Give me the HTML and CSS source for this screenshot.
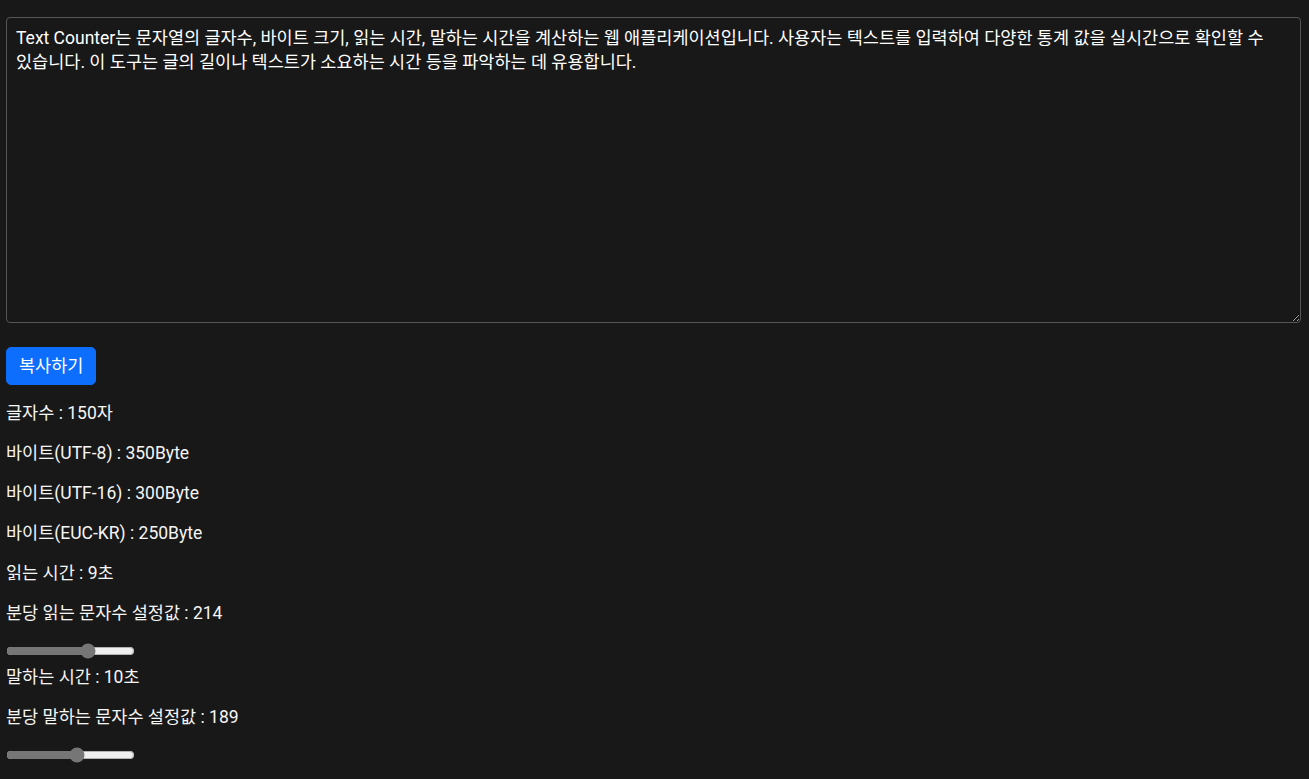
FILE: index.html
```html
<!DOCTYPE html>
<html lang="ko">
<head>
    <meta charset="UTF-8">
    <meta name="viewport" content="width=device-width, initial-scale=1.0">
    <title>Text Counter</title>
    <link rel="stylesheet" href="styles.css">
</head>
<body>
    <div class="container">
        <textarea class="text-input" id="text-input" spellcheck="false">Text Counter는 문자열의 글자수, 바이트 크기, 읽는 시간, 말하는 시간을 계산하는 웹 애플리케이션입니다. 사용자는 텍스트를 입력하여 다양한 통계 값을 실시간으로 확인할 수 있습니다. 이 도구는 글의 길이나 텍스트가 소요하는 시간 등을 파악하는 데 유용합니다.</textarea>

        <button class="copy-button" type="button">복사하기</button>

        <div class="stats">
            <p>글자수 : 150자</p>
            <p>바이트(UTF-8) : 350Byte</p>
            <p>바이트(UTF-16) : 300Byte</p>
            <p>바이트(EUC-KR) : 250Byte</p>
            <p>읽는 시간 : 9초</p>
            <p>분당 읽는 문자수 설정값 : 214</p>
            <input class="speed-range" type="range" min="50" max="300" value="214">
            <p>말하는 시간 : 10초</p>
            <p>분당 말하는 문자수 설정값 : 189</p>
            <input class="speed-range" type="range" min="50" max="300" value="189">
        </div>
    </div>
</body>
</html>
```

FILE: styles.css
```css
body {
    margin: 0;
    background-color: #181818;
    color: #f5f5f5;
    font-family: Roboto, "Noto Sans CJK KR", sans-serif;
    font-size: 17.5px;
    line-height: 24px;
    word-break: keep-all;
}

.container {
    padding: 17px 8px 0 6px;
}

.text-input {
    display: block;
    width: 100%;
    height: 306px;
    box-sizing: border-box;
    padding: 8px 9px;
    background-color: #181818;
    color: #ffffff;
    border: 1px solid #555555;
    border-radius: 4px;
    font-family: inherit;
    font-size: 17.5px;
    line-height: 24px;
    word-break: keep-all;
    resize: vertical;
    outline: none;
}

.copy-button {
    display: block;
    margin-top: 24px;
    padding: 6px 12px;
    height: 38px;
    background-color: #0d6efd;
    color: #ffffff;
    border: 1px solid #0d6efd;
    border-radius: 5px;
    font-family: inherit;
    font-size: 17.5px;
    line-height: 24px;
    cursor: pointer;
}

.stats {
    padding-top: 16px;
}

.stats p {
    margin: 0 0 16px 0;
}

.speed-range {
    display: block;
    width: 129px;
    height: 16px;
    margin: 18px 0 6px 0;
    accent-color: #767676;
}
```
